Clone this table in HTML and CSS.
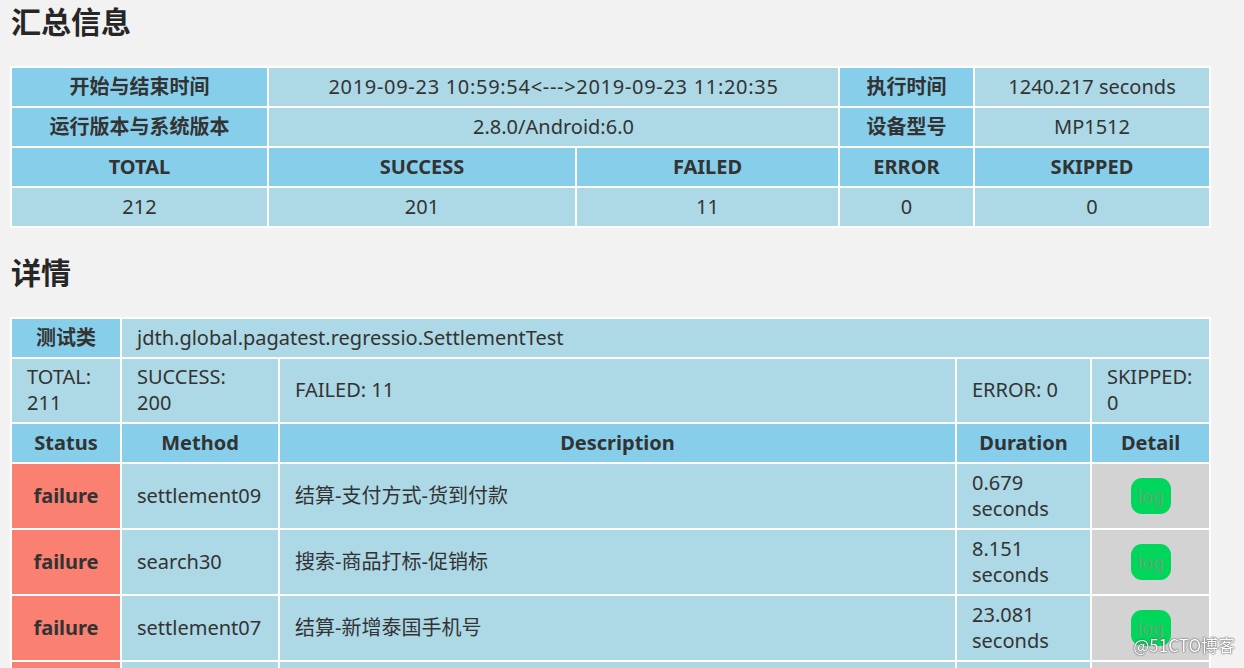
FILE: index.html
```html
<!DOCTYPE html>
<html lang="zh-CN">
<head>
<meta charset="utf-8">
<title>测试报告</title>
<link rel="stylesheet" href="styles.css">
</head>
<body>
<h1 class="title">汇总信息</h1>
<div class="summary">
  <div class="cell head">开始与结束时间</div>
  <div class="cell center span2 stamp">2019-09-23 10:59:54&lt;---&gt;2019-09-23 11:20:35</div>
  <div class="cell head">执行时间</div>
  <div class="cell center">1240.217 seconds</div>

  <div class="cell head">运行版本与系统版本</div>
  <div class="cell center span2">2.8.0/Android:6.0</div>
  <div class="cell head">设备型号</div>
  <div class="cell center">MP1512</div>

  <div class="cell head">TOTAL</div>
  <div class="cell head">SUCCESS</div>
  <div class="cell head">FAILED</div>
  <div class="cell head">ERROR</div>
  <div class="cell head">SKIPPED</div>

  <div class="cell center">212</div>
  <div class="cell center">201</div>
  <div class="cell center">11</div>
  <div class="cell center">0</div>
  <div class="cell center">0</div>
</div>

<h1 class="title second">详情</h1>
<div class="detail">
  <div class="cell head">测试类</div>
  <div class="cell span4">jdth.global.pagatest.regressio.SettlementTest</div>

  <div class="cell counts">TOTAL: 211</div>
  <div class="cell counts">SUCCESS: 200</div>
  <div class="cell counts">FAILED: 11</div>
  <div class="cell counts">ERROR: 0</div>
  <div class="cell counts">SKIPPED: 0</div>

  <div class="cell head">Status</div>
  <div class="cell head">Method</div>
  <div class="cell head">Description</div>
  <div class="cell head">Duration</div>
  <div class="cell head">Detail</div>

  <div class="cell status failure">failure</div>
  <div class="cell">settlement09</div>
  <div class="cell">结算-支付方式-货到付款</div>
  <div class="cell">0.679 seconds</div>
  <div class="cell log-cell"><span class="log">log</span></div>

  <div class="cell status failure">failure</div>
  <div class="cell">search30</div>
  <div class="cell">搜索-商品打标-促销标</div>
  <div class="cell">8.151 seconds</div>
  <div class="cell log-cell"><span class="log">log</span></div>

  <div class="cell status failure">failure</div>
  <div class="cell">settlement07</div>
  <div class="cell">结算-新增泰国手机号</div>
  <div class="cell">23.081 seconds</div>
  <div class="cell log-cell"><span class="log">log</span></div>

  <div class="cell status failure row-tail"></div>
  <div class="cell row-tail"></div>
  <div class="cell row-tail"></div>
  <div class="cell row-tail"></div>
  <div class="cell log-cell row-tail"></div>
</div>

<div class="watermark">@51CTO博客</div>
</body>
</html>
```

FILE: styles.css
```css
html, body {
  margin: 0;
  padding: 0;
}

body {
  background: #f2f2f2;
  color: #333;
  font-family: "Noto Sans", "Noto Sans CJK SC", sans-serif;
  font-size: 20px;
  padding: 2px 35px 40px 10px;
}

.title {
  margin: 0 0 24px 1px;
  font-size: 30px;
  line-height: 40px;
  font-weight: bold;
  color: #262626;
}

.title.second {
  margin-top: 25px;
  margin-bottom: 24px;
}

.summary,
.detail {
  display: grid;
  gap: 2px;
  padding: 2px;
  background: #fff;
  width: max-content;
}

.summary {
  grid-template-columns: 255px 306px 261px 133px 234px;
}

.detail {
  grid-template-columns: 108px 156px 675px 133px 117px;
}

.cell {
  background: #add8e6;
  padding: 6px 15px;
  line-height: 26px;
  display: flex;
  align-items: center;
  box-sizing: border-box;
  min-height: 38px;
}

.row-tail {
  min-height: 64px;
}

.counts {
  padding-top: 5px;
}

.stamp {
  letter-spacing: 0.7px;
}

.center {
  justify-content: center;
  text-align: center;
}

.head {
  background: #87ceeb;
  font-weight: bold;
  justify-content: center;
  text-align: center;
}

.span2 {
  grid-column: span 2;
}

.span4 {
  grid-column: span 4;
}

.status {
  font-weight: bold;
  justify-content: center;
}

.failure {
  background: #fa8072;
}

.log-cell {
  background: #d3d3d3;
  justify-content: center;
}

.log {
  display: inline-flex;
  align-items: center;
  justify-content: center;
  width: 40px;
  height: 36px;
  border-radius: 11px;
  background: #00d65b;
  color: #5fa772;
  font-size: 18px;
  line-height: 1;
}

.watermark {
  position: fixed;
  right: 9px;
  bottom: 11px;
  font-family: "Noto Sans CJK SC", sans-serif;
  font-size: 17px;
  color: #fff;
  text-shadow: 0 0 2px #555, 0 0 1px #333;
}
```
